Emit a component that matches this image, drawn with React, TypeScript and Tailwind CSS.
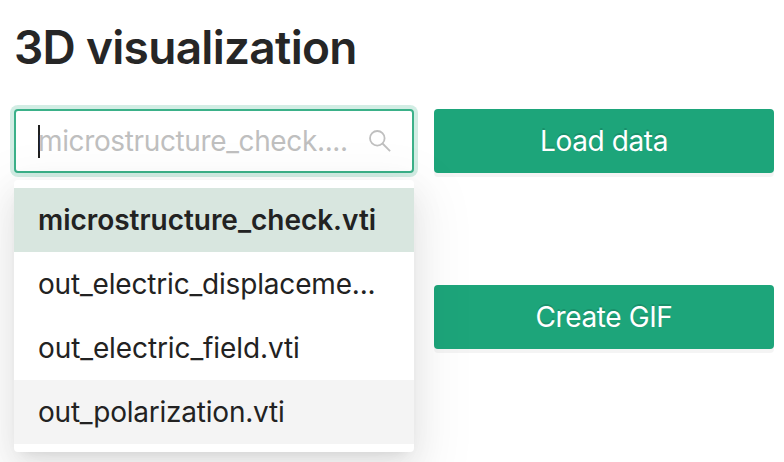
import type { ReactNode } from 'react';

const options = [
  { name: 'microstructure_check.vti', style: 'bg-[#d8e6df] font-semibold tracking-[-0.03px]' },
  { name: 'out_electric_displaceme...', style: 'tracking-[-0.18px]' },
  { name: 'out_electric_field.vti', style: 'tracking-[-0.1px]' },
  { name: 'out_polarization.vti', style: 'bg-[#f4f4f4] tracking-[-0.23px]' },
];

function PrimaryButton({ children }: { children: ReactNode }) {
  return (
    <button className="flex h-16 w-full items-center justify-center rounded-[4px] bg-[#1da57a] text-[28px] leading-none tracking-[-0.4px] whitespace-nowrap text-white shadow-[0_4px_0_rgba(0,0,0,0.045)] [text-shadow:0_-2px_0_rgba(0,0,0,0.12)]">
      {children}
    </button>
  );
}

export default function App() {
  return (
    <main className="h-[462px] w-[784px] overflow-hidden bg-white pt-[18px] pr-[10px] pl-[14px] font-['Inter',sans-serif] text-[#222]">
      <h1 className="h-[58px] text-[46px] leading-[58px] font-semibold tracking-[-0.7px] whitespace-nowrap text-[#262626]">3D visualization</h1>
      <div className="mt-[33px] flex gap-5">
        <section className="relative z-10 w-[400px] shrink-0">
          <div className="flex h-16 items-center rounded-[4px] border-2 border-[#3bb189] bg-white pr-[21px] pl-[22px] shadow-[0_0_0_4px_rgba(29,165,122,0.2)]">
            <div className="-mr-0.5 h-[33px] w-0.5 bg-[#1f1f1f]" />
            <span className="flex-1 text-[28px] leading-none tracking-[-0.37px] whitespace-nowrap text-[#bfbfbf]">microstructure_check....</span>
            <svg className="shrink-0" width="22" height="22" viewBox="0 0 22 22" fill="none" stroke="#bfbfbf" strokeWidth="1.8">
              <circle cx="8.3" cy="8.3" r="7.3" />
              <path d="m13.5 13.5 7.6 7.6" />
            </svg>
          </div>
          <ul className="absolute top-[71px] left-0 w-full rounded-[4px] bg-white py-2 shadow-[0_6px_12px_-8px_rgba(0,0,0,0.12),0_12px_32px_rgba(0,0,0,0.08),0_18px_56px_16px_rgba(0,0,0,0.05)]">
            {options.map(({ name, style }) => (
              <li key={name} className={`flex h-16 items-center px-6 text-[28px] leading-none whitespace-nowrap ${style}`}>
                {name}
              </li>
            ))}
          </ul>
        </section>
        <section className="flex w-[340px] shrink-0 flex-col gap-28">
          <PrimaryButton>Load data</PrimaryButton>
          <PrimaryButton>Create GIF</PrimaryButton>
        </section>
      </div>
    </main>
  );
}
